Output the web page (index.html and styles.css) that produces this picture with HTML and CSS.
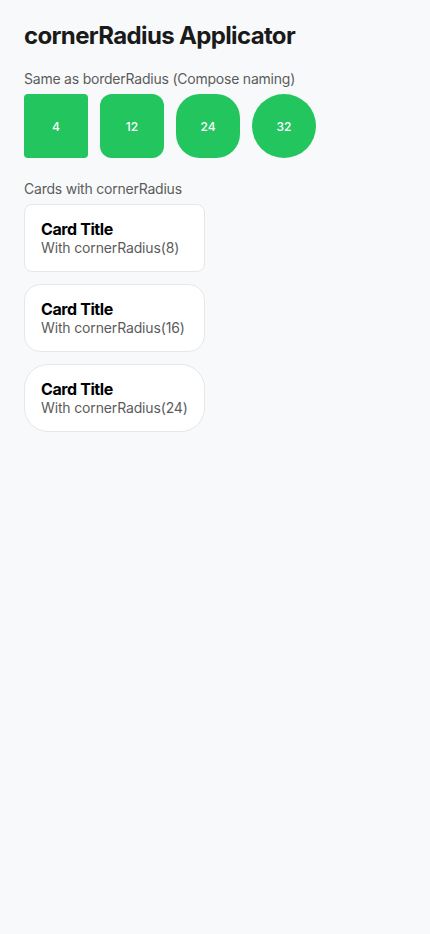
FILE: index.html
```html
<!DOCTYPE html>
<html>
<head>
<meta charset="utf-8">
<link rel="stylesheet" href="styles.css">
</head>
<body>
<div class="page">
  <h1 class="title">cornerRadius Applicator</h1>
  <section class="section">
    <div class="label">Same as borderRadius (Compose naming)</div>
    <div class="boxes">
      <div class="box r4">4</div>
      <div class="box r12">12</div>
      <div class="box r24">24</div>
      <div class="box r32">32</div>
    </div>
  </section>
  <section class="section">
    <div class="label">Cards with cornerRadius</div>
    <div class="cards">
      <div class="card c8"><div class="card-title">Card Title</div><div class="card-sub">With cornerRadius(8)</div></div>
      <div class="card c16"><div class="card-title">Card Title</div><div class="card-sub">With cornerRadius(16)</div></div>
      <div class="card c24"><div class="card-title">Card Title</div><div class="card-sub">With cornerRadius(24)</div></div>
    </div>
  </section>
</div>
</body>
</html>
```
FILE: styles.css
```css
html, body { margin: 0; padding: 0; }
body {
  background: #f8f9fa;
  font-family: Inter, "Noto Sans", sans-serif;
  color: #1a1a1a;
  min-height: 934px;
}
.page {
  padding: 24px;
  display: flex;
  flex-direction: column;
  align-items: flex-start;
  gap: 22px;
}
.title {
  margin: 0;
  font-size: 24px;
  font-weight: 700;
  line-height: 24px;
  letter-spacing: -0.65px;
  color: #1a1a1a;
}
.section { display: flex; flex-direction: column; gap: 7px; align-items: flex-start; }
.label { font-size: 14px; line-height: 17px; color: #5c5c5c; letter-spacing: -0.22px; }
.boxes { display: flex; gap: 12px; }
.box {
  width: 64px; height: 64px;
  background: #22c55e;
  color: #fff;
  font-size: 12px;
  font-weight: 500;
  display: flex; align-items: center; justify-content: center;
}
.r4 { border-radius: 4px; }
.r12 { border-radius: 12px; }
.r24 { border-radius: 24px; }
.r32 { border-radius: 32px; }
.cards { display: flex; flex-direction: column; gap: 12px; }
.card {
  background: #fff;
  border: 1px solid #e5e7eb;
  padding: 14px 16px;
}
.c8 { border-radius: 8px; }
.c16 { border-radius: 16px; }
.c24 { border-radius: 24px; }
.card-title { font-size: 16px; font-weight: 700; line-height: 20px; color: #000; letter-spacing: -0.4px; }
.card-sub { font-size: 14px; line-height: 18px; color: #5c5c5c; letter-spacing: -0.15px; }
```
